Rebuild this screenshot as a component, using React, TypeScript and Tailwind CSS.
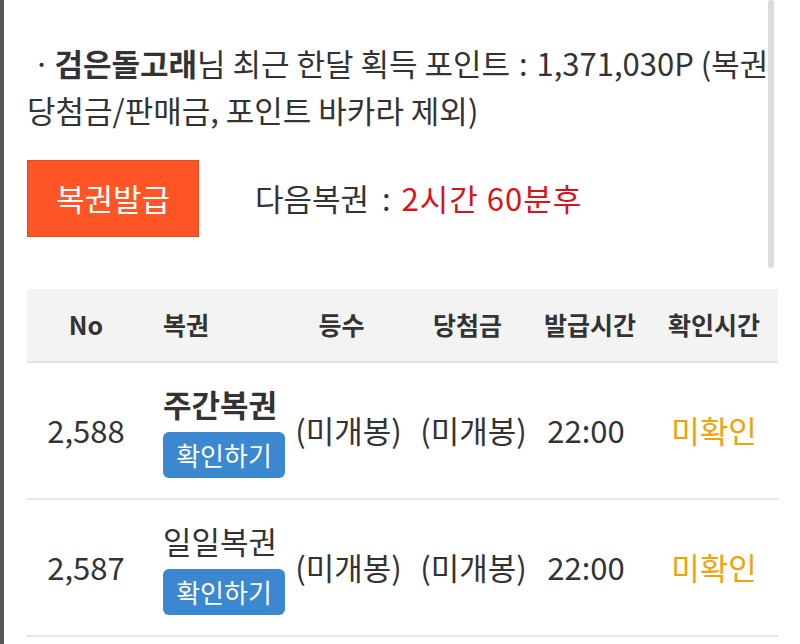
const font = { fontFamily: '"Noto Sans CJK KR", "Noto Sans", sans-serif' };

interface Ticket {
  no: string;
  name: string;
  bold: boolean;
  rank: string;
  prize: string;
  issued: string;
  checked: string;
}

const tickets: Ticket[] = [
  { no: '2,588', name: '주간복권', bold: true, rank: '(미개봉)', prize: '(미개봉)', issued: '22:00', checked: '미확인' },
  { no: '2,587', name: '일일복권', bold: false, rank: '(미개봉)', prize: '(미개봉)', issued: '22:00', checked: '미확인' },
];

const cols = 'grid grid-cols-[118px_147px_113px_125px_120px_128px]';

export default function App() {
  return (
    <div
      className="relative w-[800px] h-[644px] overflow-hidden bg-white border-l-4 border-[#555] text-[#333]"
      style={font}
    >
      {/* scrollbar */}
      <div className="absolute left-[764px] top-0 w-[6px] h-[268px] rounded-full bg-[#dcdcdc]" />

      <div className="pl-[23px] pr-[18px]">
        <p className="pt-[39px] pl-[6px] text-[31px] leading-[47px] whitespace-nowrap">
          <span className="mr-[4px]">·</span>
          <b className="font-bold">검은돌고래</b>님 최근 한달 획득 포인트 <span className="mx-[2px]">:</span> 1,371,030P (복권
          <br />
          <span className="-ml-[6px]">당첨금/판매금, 포인트 바카라 제외)</span>
        </p>

        <div className="mt-[27px] flex items-center">
          <button className="w-[172px] h-[77px] bg-[#ff5526] border border-[#e4491d] text-white text-[31px]">
            복권발급
          </button>
          <div className="ml-[56px] text-[31px]">
            다음복권 <span className="ml-[6px] mr-[4px]">:</span>{' '}
            <span className="text-[#d7141a] tracking-[1px]">2시간 60분후</span>
          </div>
        </div>

        <div className="mt-[52px] w-[751px]">
          <div className={`${cols} h-[74px] items-center bg-[#f3f3f3] border-b-2 border-[#e2e2e2] text-[25px] font-bold`}>
            <div className="text-center">No</div>
            <div className="pl-[18px]">복권</div>
            <div className="text-center -ml-[14px]">등수</div>
            <div className="text-center">당첨금</div>
            <div className="text-center">발급시간</div>
            <div className="text-center">확인시간</div>
          </div>

          {tickets.map((t) => (
            <div
              key={t.no}
              className={`${cols} h-[137px] items-center border-b-2 border-[#e6e6e6] text-[31px]`}
            >
              <div className="text-center">{t.no}</div>
              <div className="pl-[18px] flex flex-col items-start">
                <span className={`leading-[40px] ${t.bold ? 'font-bold' : ''}`}>{t.name}</span>
                <button className="mt-[8px] w-[122px] h-[46px] rounded-[6px] bg-[#3b88d0] text-white text-[26px] leading-none">
                  확인하기
                </button>
              </div>
              <div className="text-center">{t.rank}</div>
              <div className="text-center pl-[12px]">{t.prize}</div>
              <div className="text-center -ml-[8px]">{t.issued}</div>
              <div className="text-center">
                <span className="text-[#f0a20c]">{t.checked}</span>
              </div>
            </div>
          ))}
        </div>
      </div>
    </div>
  );
}
